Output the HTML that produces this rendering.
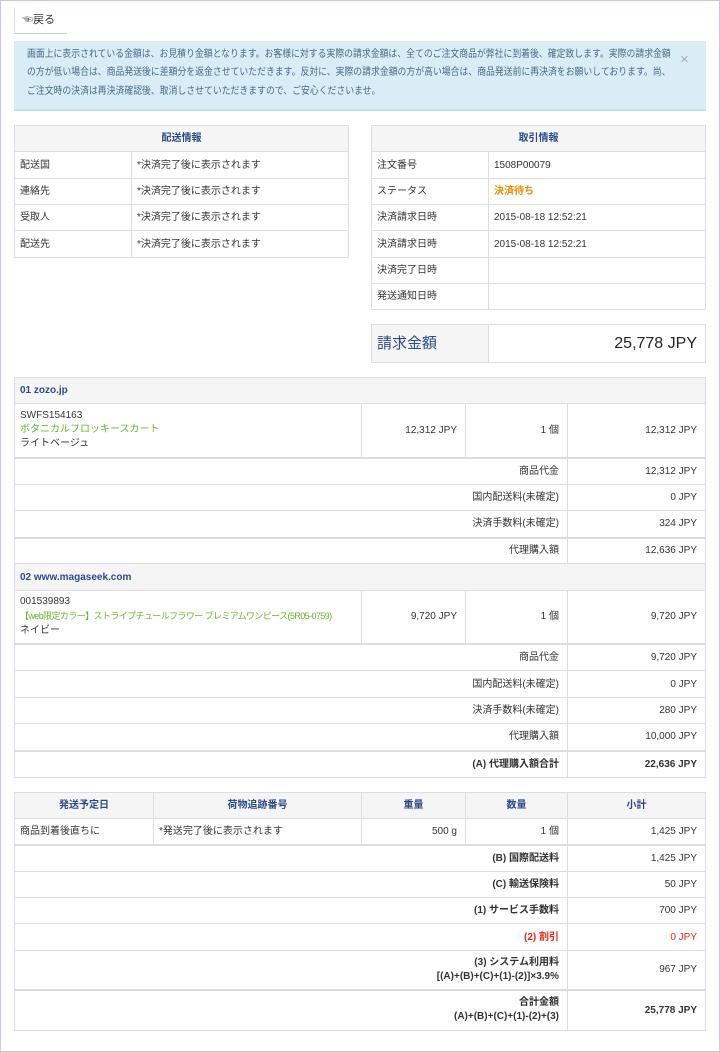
<!DOCTYPE html>
<html><head><meta charset="utf-8"><style>
*{margin:0;padding:0;box-sizing:border-box}
html,body{width:720px;height:1052px;background:#fff;overflow:hidden}
body{position:relative;font-family:"Liberation Sans","Noto Sans CJK JP",sans-serif;font-size:10px;color:#333}
.frame{position:absolute;left:0;top:0;width:720px;height:1052px;border:1px solid #c9c9dd;pointer-events:none}
.abs{position:absolute}
table{border-collapse:collapse;table-layout:fixed;position:absolute}
td,th{border:1px solid #ddd;padding:0 5px;white-space:nowrap;overflow:hidden;vertical-align:middle;line-height:13px}
th{background:#f5f5f5;color:#2b4a8c;font-weight:bold;font-size:10px;text-align:center}
.r{text-align:right;padding-right:8px}
.hd td{background:#f5f5f5;color:#2b4a8c;font-weight:bold}
.tk td{border-top:2px solid #ddd}
.g{color:#6ab22c}
.red{color:#e8261c}
b{font-weight:bold}
.info{position:absolute;left:14px;top:41px;width:692px;height:70px;background:#d9edf7;border-bottom:2px solid #c4e2ee;color:#4a6a86;font-size:10px;overflow:hidden}
.info .ln{position:absolute;left:13px;white-space:nowrap;transform:scaleX(0.885);transform-origin:0 0;line-height:12px}
</style></head><body>
<div class="abs" style="left:14px;top:8px;width:53px;height:26px;border-left:1px solid #ddd;border-bottom:1px solid #ccc;padding:6px 0 0 7px;font-size:11px;color:#333;line-height:13px">☜戻る</div>
<div class="info">
<div class="ln" style="top:8px">画面上に表示されている金額は、お見積り金額となります。お客様に対する実際の請求金額は、全てのご注文商品が弊社に到着後、確定致します。実際の請求金額</div>
<div class="ln" style="top:26px">の方が低い場合は、商品発送後に差額分を返金させていただきます。反対に、実際の請求金額の方が高い場合は、商品発送前に再決済をお願いしております。尚、</div>
<div class="ln" style="top:45px">ご注文時の決済は再決済確認後、取消しさせていただきますので、ご安心くださいませ。</div>
<span class="abs" style="left:666px;top:11px;font-size:15px;line-height:15px;color:#aab">×</span></div>

<table style="left:14px;top:125px;width:335px">
<col style="width:117px"><col>
<tr style="height:26px"><th colspan="2">配送情報</th></tr>
<tr style="height:27px"><td>配送国</td><td>*決済完了後に表示されます</td></tr>
<tr style="height:26px"><td>連絡先</td><td>*決済完了後に表示されます</td></tr>
<tr style="height:26px"><td>受取人</td><td>*決済完了後に表示されます</td></tr>
<tr style="height:27px"><td>配送先</td><td>*決済完了後に表示されます</td></tr>
</table>

<table style="left:371px;top:125px;width:335px">
<col style="width:117px"><col>
<tr style="height:26px"><th colspan="2">取引情報</th></tr>
<tr style="height:27px"><td>注文番号</td><td>1508P00079</td></tr>
<tr style="height:26px"><td>ステータス</td><td style="color:#f08a00;font-weight:bold">決済待ち</td></tr>
<tr style="height:26px"><td>決済請求日時</td><td>2015-08-18 12:52:21</td></tr>
<tr style="height:27px"><td>決済請求日時</td><td>2015-08-18 12:52:21</td></tr>
<tr style="height:26px"><td>決済完了日時</td><td></td></tr>
<tr style="height:26px"><td>発送通知日時</td><td></td></tr>
</table>

<table style="left:371px;top:324px;width:335px">
<col style="width:117px"><col>
<tr style="height:38px"><td style="background:#f5f5f5;color:#2b4a8c;font-size:15px;line-height:18px">請求金額</td><td class="r" style="font-size:16px;line-height:18px;color:#222">25,778 JPY</td></tr>
</table>

<table style="left:14px;top:377px;width:692px">
<col style="width:347px"><col style="width:104px"><col style="width:102px"><col>
<tr class="hd" style="height:26px"><td colspan="4">01 zozo.jp</td></tr>
<tr style="height:54px"><td style="line-height:14px">SWFS154163<br><span class="g">ボタニカルフロッキースカート</span><br>ライトベージュ</td><td class="r">12,312 JPY</td><td class="r">1 個</td><td class="r">12,312 JPY</td></tr>
<tr class="tk" style="height:27px"><td colspan="3" class="r">商品代金</td><td class="r">12,312 JPY</td></tr>
<tr style="height:26px"><td colspan="3" class="r">国内配送料(未確定)</td><td class="r">0 JPY</td></tr>
<tr style="height:27px"><td colspan="3" class="r">決済手数料(未確定)</td><td class="r">324 JPY</td></tr>
<tr class="tk" style="height:26px"><td colspan="3" class="r">代理購入額</td><td class="r">12,636 JPY</td></tr>
<tr class="hd" style="height:27px"><td colspan="4">02 www.magaseek.com</td></tr>
<tr style="height:53px"><td style="line-height:14px">001539893<br><span class="g" style="font-size:9px;letter-spacing:-0.6px">【web限定カラー】ストライプチュールフラワー プレミアムワンピース(5R05-0759)</span><br>ネイビー</td><td class="r">9,720 JPY</td><td class="r">1 個</td><td class="r">9,720 JPY</td></tr>
<tr class="tk" style="height:27px"><td colspan="3" class="r">商品代金</td><td class="r">9,720 JPY</td></tr>
<tr style="height:27px"><td colspan="3" class="r">国内配送料(未確定)</td><td class="r">0 JPY</td></tr>
<tr style="height:26px"><td colspan="3" class="r">決済手数料(未確定)</td><td class="r">280 JPY</td></tr>
<tr style="height:27px"><td colspan="3" class="r">代理購入額</td><td class="r">10,000 JPY</td></tr>
<tr class="tk" style="height:27px"><td colspan="3" class="r"><b>(A) 代理購入額合計</b></td><td class="r"><b>22,636 JPY</b></td></tr>
</table>

<table style="left:14px;top:792px;width:692px">
<col style="width:139px"><col style="width:208px"><col style="width:104px"><col style="width:102px"><col>
<tr style="height:26px"><th>発送予定日</th><th>荷物追跡番号</th><th>重量</th><th>数量</th><th>小計</th></tr>
<tr style="height:26px"><td>商品到着後直ちに</td><td>*発送完了後に表示されます</td><td class="r">500 g</td><td class="r">1 個</td><td class="r">1,425 JPY</td></tr>
<tr class="tk" style="height:27px"><td colspan="4" class="r"><b>(B) 国際配送料</b></td><td class="r">1,425 JPY</td></tr>
<tr style="height:26px"><td colspan="4" class="r"><b>(C) 輸送保険料</b></td><td class="r">50 JPY</td></tr>
<tr style="height:26px"><td colspan="4" class="r"><b>(1) サービス手数料</b></td><td class="r">700 JPY</td></tr>
<tr style="height:27px"><td colspan="4" class="r red"><b>(2) 割引</b></td><td class="r red">0 JPY</td></tr>
<tr style="height:39px"><td colspan="4" class="r" style="line-height:14px"><b>(3) システム利用料<br>[(A)+(B)+(C)+(1)-(2)]×3.9%</b></td><td class="r">967 JPY</td></tr>
<tr class="tk" style="height:41px"><td colspan="4" class="r" style="line-height:14px"><b>合計金額<br>(A)+(B)+(C)+(1)-(2)+(3)</b></td><td class="r"><b>25,778 JPY</b></td></tr>
</table>
<div class="frame"></div>
</body></html>
